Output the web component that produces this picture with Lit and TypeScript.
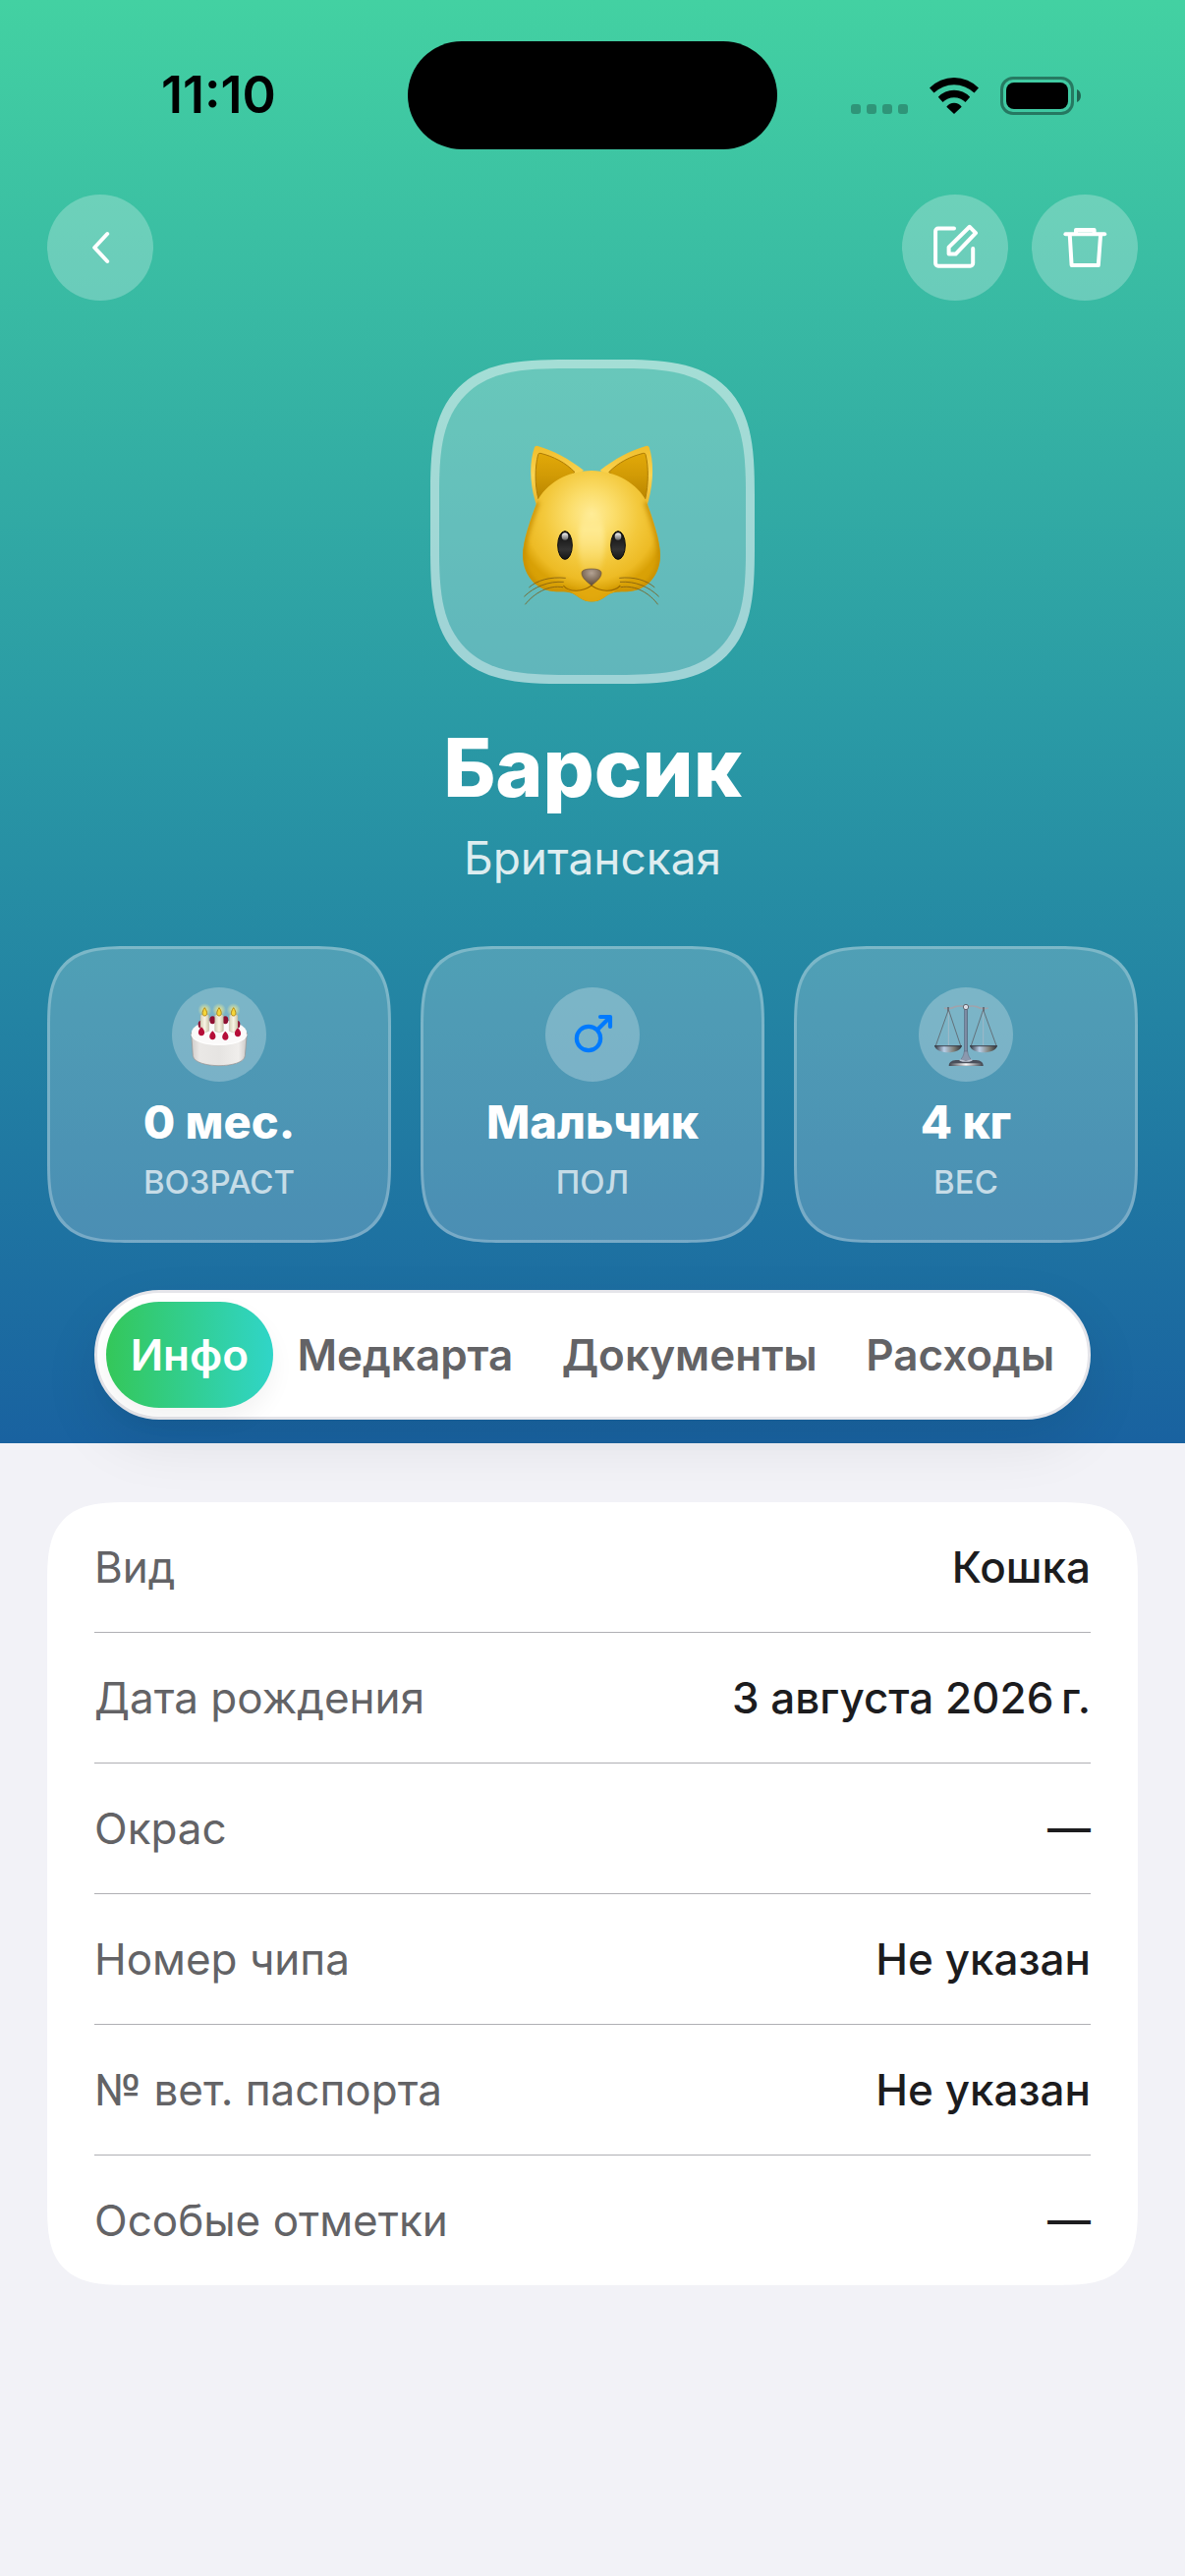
import { css, html, LitElement, svg } from "lit";
import { customElement, property, state } from "lit/decorators.js";
import { classMap } from "lit/directives/class-map.js";

export type PetIconName = "back" | "edit" | "trash" | "cake" | "male" | "scales" | "cat";

// Round icons share one box per family, the cat has a taller one.
const VIEW_BOXES: Record<PetIconName, string> = {
	back: "0 0 108 108",
	edit: "0 0 108 108",
	trash: "0 0 108 108",
	cake: "435 195 288 288",
	male: "435 195 288 288",
	scales: "435 195 288 288",
	cat: "324 276 450 534",
};

const ICONS = {
	back: svg`
		<path d="M61.2 40 L48.2 54 L61.2 68" fill="none" stroke="#fff" stroke-width="4" stroke-linecap="round" stroke-linejoin="round"/>
	`,
	edit: svg`
		<g fill="none" stroke="#fff" stroke-width="4" stroke-linecap="round" stroke-linejoin="round">
			<path d="M53 34.6 H36.8 a2.7 2.7 0 0 0 -2.7 2.7 V70 a2.7 2.7 0 0 0 2.7 2.7 H69.5 a2.7 2.7 0 0 0 2.7 -2.7 V55"/>
			<path d="M68.8 32.8 L75 39.2 L54.6 60.6 H47.6 V53.6 Z"/>
		</g>
	`,
	trash: svg`
		<g fill="none" stroke="#fff" stroke-width="4" stroke-linecap="round" stroke-linejoin="round">
			<path d="M34.4 40.3 H74.2"/>
			<path d="M45 39 V36 H63.6 V39"/>
			<path d="M38.8 42 L40.6 72 H67.8 L70 42"/>
		</g>
	`,
	cake: svg`
		<defs>
			<linearGradient id="side" x1="0" x2="1">
				<stop offset="0" stop-color="#cfccca"/><stop offset=".15" stop-color="#eae8e6"/>
				<stop offset=".5" stop-color="#e6e4e2"/><stop offset=".85" stop-color="#f0eeec"/><stop offset="1" stop-color="#cac7c5"/>
			</linearGradient>
			<radialGradient id="glow">
				<stop offset="0" stop-color="#ffee78" stop-opacity=".95"/><stop offset="1" stop-color="#f4f0a0" stop-opacity="0"/>
			</radialGradient>
			<linearGradient id="wax" x1="0" x2="1">
				<stop offset="0" stop-color="#d6cfb8"/><stop offset=".5" stop-color="#f8f4e4"/><stop offset="1" stop-color="#cdc5ab"/>
			</linearGradient>
		</defs>
		<path d="M494 334 L499 404 C504 444 654 444 658 404 L664 334 Z" fill="url(#side)" stroke="#99908c" stroke-width="2"/>
		<ellipse cx="579" cy="333" rx="84" ry="38" fill="#fbfafa"/>
		<path d="M495 338 C500 380 658 380 663 338" fill="none" stroke="#fff" stroke-width="4"/>
		<g fill="#8f0f32">
			<ellipse cx="559" cy="295" rx="9" ry="12"/><ellipse cx="598" cy="295" rx="9" ry="12"/>
			<ellipse cx="522" cy="308" rx="7" ry="11"/><ellipse cx="636" cy="308" rx="7" ry="11"/>
		</g>
		<g fill="url(#wax)" stroke="#aaa48f" stroke-width="1">
			<path d="M522 280 Q535 275 548 280 V328 Q535 337 522 328 Z"/>
			<path d="M566 280 Q579 275 592 280 V328 Q579 337 566 328 Z"/>
			<path d="M610 280 Q623 275 636 280 V328 Q623 337 610 328 Z"/>
		</g>
		<g fill="url(#glow)">
			<circle cx="535" cy="264" r="21"/><circle cx="579" cy="264" r="21"/><circle cx="623" cy="264" r="21"/>
		</g>
		<g fill="#f5d63a" stroke="#a87608" stroke-width="2.4">
			<path d="M535 257 C545 271 543 282 535 282 C527 282 525 271 535 257 Z"/>
			<path d="M579 257 C589 271 587 282 579 282 C571 282 569 271 579 257 Z"/>
			<path d="M623 257 C633 271 631 282 623 282 C615 282 613 271 623 257 Z"/>
		</g>
		<g fill="#b50d38">
			<path d="M525 316 C538 327 537 343 525 343 C513 343 512 327 525 316 Z"/>
			<path d="M559 328 C572 339 571 355 559 355 C547 355 546 339 559 328 Z"/>
			<path d="M598 329 C611 340 610 356 598 356 C586 356 585 340 598 329 Z"/>
			<path d="M636 319 C649 330 648 346 636 346 C624 346 623 330 636 319 Z"/>
		</g>
	`,
	male: svg`
		<g fill="none" stroke="#007aff" stroke-width="12.5" stroke-linecap="round" stroke-linejoin="round">
			<circle cx="567" cy="351" r="36.5"/>
			<path d="M595 323 L631 287"/>
			<path d="M603 285 H633 V315"/>
		</g>
	`,
	scales: svg`
		<defs>
			<linearGradient id="pole" x1="0" x2="1">
				<stop offset="0" stop-color="#4e5a70"/><stop offset=".5" stop-color="#93a2ba"/><stop offset="1" stop-color="#454f63"/>
			</linearGradient>
			<linearGradient id="pan" x1="0" x2="1">
				<stop offset="0" stop-color="#2c3038"/><stop offset=".35" stop-color="#b9cfe8"/>
				<stop offset=".7" stop-color="#7e7f78"/><stop offset="1" stop-color="#2c3038"/>
			</linearGradient>
			<linearGradient id="foot" x1="0" x2="1">
				<stop offset="0" stop-color="#3f434c"/><stop offset=".5" stop-color="#fff"/><stop offset="1" stop-color="#3f434c"/>
			</linearGradient>
		</defs>
		<path d="M526 262 V372 M632 262 V372" stroke="#a9bac6" stroke-width="2.4"/>
		<path d="M525 266 L487 373 M527 266 L563 373 M631 266 L595 373 M633 266 L672 373" stroke="#5c5f66" stroke-width="2.4"/>
		<path d="M513 258 Q530 263 546 254 Q563 249 579 256 Q595 249 612 254 Q628 263 647 258" fill="none" stroke="#a0a3ac" stroke-width="5"/>
		<path d="M525 255 V268 M633 255 V268" stroke="#55555e" stroke-width="4"/>
		<rect x="574" y="258" width="10" height="138" fill="url(#pole)"/>
		<circle cx="579" cy="255" r="8" fill="#d9dde5" stroke="#50545e" stroke-width="2.5"/>
		<path d="M574 390 H584 C585 404 592 412 598 420 H560 C566 412 573 404 574 390 Z" fill="#8b98ae" stroke="#5d687c" stroke-width="1.5"/>
		<path d="M483 372 H567 C563 401 487 401 483 372 Z" fill="url(#pan)"/>
		<path d="M591 372 H675 C671 401 595 401 591 372 Z" fill="url(#pan)"/>
		<path d="M483 374 H567 M591 374 H675" stroke="#3c4350" stroke-width="3"/>
		<path d="M527 435 C527 420 540 417 554 417 H605 C619 417 632 420 632 435 Z" fill="#4a4f5b"/>
		<path d="M531 427 H628 L631 434 H528 Z" fill="url(#foot)"/>
		<path d="M560 417 Q579 424 598 417" fill="none" stroke="#bcc5d4" stroke-width="4"/>
	`,
	cat: svg`
		<defs>
			<radialGradient id="fur" gradientUnits="userSpaceOnUse" cx="546" cy="520" r="235">
				<stop offset="0" stop-color="#ffec97"/><stop offset=".3" stop-color="#fbdd6a"/>
				<stop offset=".62" stop-color="#f3c83b"/><stop offset=".86" stop-color="#edbb25"/><stop offset="1" stop-color="#d9a106"/>
			</radialGradient>
			<linearGradient id="muzzle" x1="0" x2="0" y1="0" y2="1">
				<stop offset="0" stop-color="#ffec97" stop-opacity="0"/><stop offset=".3" stop-color="#ffec97" stop-opacity=".8"/>
				<stop offset="1" stop-color="#ffec97" stop-opacity="0"/>
			</linearGradient>
			<linearGradient id="ear" x1="0" x2="0" y1="0" y2="1">
				<stop offset="0" stop-color="#e2a909"/><stop offset=".5" stop-color="#d19a05"/><stop offset="1" stop-color="#b98500"/>
			</linearGradient>
			<linearGradient id="rim" x1="0" x2="0" y1="0" y2="1">
				<stop offset="0" stop-color="#f0bd2a"/><stop offset=".5" stop-color="#fbd452"/><stop offset="1" stop-color="#e9b52a"/>
			</linearGradient>
			<linearGradient id="eye" x1="0" x2="0" y1="0" y2="1">
				<stop offset="0" stop-color="#0c0c0c"/><stop offset=".65" stop-color="#333"/><stop offset="1" stop-color="#161616"/>
			</linearGradient>
			<linearGradient id="shine" x1="0" x2="0" y1="0" y2="1">
				<stop offset="0" stop-color="#f4f4f4"/><stop offset="1" stop-color="#666"/>
			</linearGradient>
			<radialGradient id="nose" cx=".5" cy=".25" r=".7">
				<stop offset="0" stop-color="#b4a394"/><stop offset="1" stop-color="#64503c"/>
			</radialGradient>
			<filter id="soft" x="-20%" y="-20%" width="140%" height="140%"><feGaussianBlur stdDeviation="7"/></filter>
			<clipPath id="head">
				<path d="M546 387 C470 387 404 430 380 482 C360 535 336 600 336 646 C338 715 385 757 440 757 C488 757 490 763 507 774 Q546 801 586 774 C603 763 605 757 652 757 C707 757 755 715 756 646 C756 600 733 535 714 482 C690 430 622 387 546 387 Z"/>
			</clipPath>
		</defs>
		<path d="M378 492 C356 430 356 360 372 316 Q374 310 382 312 C430 326 478 352 522 386 Z" fill="url(#rim)"/>
		<path d="M716 492 C736 430 737 360 722 316 Q720 310 712 312 C664 326 616 352 572 386 Z" fill="url(#rim)"/>
		<path d="M384 474 C372 430 373 375 383 338 Q384 333 390 334 C430 344 466 362 495 392 Z" fill="url(#ear)" stroke="#ae7c05" stroke-width="3"/>
		<path d="M710 474 C720 430 721 375 711 338 Q710 333 704 334 C664 344 628 362 599 392 Z" fill="url(#ear)" stroke="#ae7c05" stroke-width="3"/>
		<g clip-path="url(#head)">
			<rect x="330" y="380" width="440" height="430" fill="url(#fur)"/>
			<ellipse cx="546" cy="610" rx="40" ry="110" fill="url(#muzzle)" filter="url(#soft)"/>
			<path d="M380 482 C360 535 336 600 336 646 C338 715 385 757 440 757 C488 757 490 763 507 774 Q546 801 586 774 C603 763 605 757 652 757 C707 757 755 715 756 646 C756 600 733 535 714 482" fill="none" stroke="#c38a00" stroke-width="18" opacity=".75" filter="url(#soft)"/>
			<path d="M462 742 C490 762 522 752 546 739 C570 752 602 762 632 742 L612 760 L586 774 Q546 801 507 774 Z" fill="#e6ac10" opacity=".75"/>
		</g>
		<path d="M460 738 C480 762 520 756 546 738 C572 756 612 762 634 738" fill="none" stroke="#9a6800" stroke-width="3.4"/>
		<ellipse cx="465" cy="615" rx="22" ry="43" fill="url(#eye)" stroke="#0c0c0c" stroke-width="3"/>
		<ellipse cx="627" cy="615" rx="22" ry="43" fill="url(#eye)" stroke="#0c0c0c" stroke-width="3"/>
		<ellipse cx="465" cy="588" rx="10" ry="11" fill="url(#shine)"/>
		<ellipse cx="627" cy="588" rx="10" ry="11" fill="url(#shine)"/>
		<path d="M516 700 C516 690 530 687 546 687 C562 687 576 690 576 700 C576 715 560 726 546 738 C532 726 516 715 516 700 Z" fill="url(#nose)" stroke="#6b5135" stroke-width="2"/>
		<g fill="none" stroke="#7c5a14" stroke-width="2.8" stroke-linecap="round" opacity=".85">
			<path d="M466 715 C420 710 380 722 356 743"/>
			<path d="M460 727 C415 724 370 742 341 771"/>
			<path d="M458 743 C415 735 370 762 344 795"/>
			<path d="M632 715 C676 710 714 722 738 743"/>
			<path d="M634 727 C680 724 722 742 751 771"/>
			<path d="M636 743 C680 735 724 762 748 795"/>
		</g>
	`,
};

@customElement("pet-icon")
export class PetIcon extends LitElement {
	@property()
	name: PetIconName = "back";

	static override styles = css`
		:host {
			display: block;
			inline-size: 100%;
		}

		svg {
			display: block;
			inline-size: 100%;
			block-size: auto;
		}
	`;

	override render() {
		return html`<svg viewBox=${VIEW_BOXES[this.name]} aria-hidden="true">${ICONS[this.name]}</svg>`;
	}
}

@customElement("phone-status")
export class PhoneStatus extends LitElement {
	static override styles = css`
		:host {
			display: grid;
			grid-template-columns: 1fr 376px 1fr;
			align-items: center;
			padding-block: 42px 46px;
			color: #000;
		}

		.time {
			padding-inline-start: 30px;
			font-size: 52px;
			font-weight: 600;
			line-height: 60px;
			text-align: center;
		}

		.island {
			block-size: 110px;
			border-radius: 55px;
			background: #000;
		}

		.signals {
			display: flex;
			justify-content: flex-end;
			align-items: center;
			gap: 22px;
			padding-inline-end: 106px;
		}

		svg {
			display: block;
		}
	`;

	override render() {
		return html`
			<time class="time">11:10</time>
			<div class="island"></div>
			<div class="signals">
				<svg width="58" height="39" viewBox="0 0 58 39" aria-hidden="true" opacity="0.25">
					<rect x="0" y="28" width="10" height="10" rx="3"/>
					<rect x="16" y="28" width="10" height="10" rx="3"/>
					<rect x="32" y="28" width="10" height="10" rx="3"/>
					<rect x="48" y="28" width="10" height="10" rx="3"/>
				</svg>
				<svg width="50" height="39" viewBox="0 -1 50 39" aria-hidden="true">
					<path d="M0 10.5 A35 35 0 0 1 50 10.5 L45.5 15.5 A29.7 29.7 0 0 0 4.5 15.5 Z"/>
					<path d="M8.8 19.7 A22.2 22.2 0 0 1 41.2 19.7 L36.5 25 A16.4 16.4 0 0 0 13.5 25 Z"/>
					<path d="M17.3 29.7 A9.4 9.4 0 0 1 32.7 29.7 L25 37 Z"/>
				</svg>
				<svg width="82" height="39" viewBox="0 0 82 39" aria-hidden="true">
					<rect x="1.5" y="1.5" width="72" height="36" rx="11.5" fill="none" stroke="#000" stroke-width="3" opacity="0.4"/>
					<rect x="6" y="6" width="63" height="27" rx="8"/>
					<path d="M78 13 C83.3 15 83.3 24 78 26 Z" opacity="0.5"/>
				</svg>
			</div>
		`;
	}
}

interface Stat {
	icon: PetIconName;
	value: string;
	label: string;
}

interface Detail {
	label: string;
	value: string;
}

@customElement("app-root")
export class AppRoot extends LitElement {
	@state()
	private tab = "Инфо";

	private readonly tabs = ["Инфо", "Медкарта", "Документы", "Расходы"];

	private readonly stats: Stat[] = [
		{ icon: "cake", value: "0 мес.", label: "ВОЗРАСТ" },
		{ icon: "male", value: "Мальчик", label: "ПОЛ" },
		{ icon: "scales", value: "4 кг", label: "ВЕС" },
	];

	private readonly details: Detail[] = [
		{ label: "Вид", value: "Кошка" },
		{ label: "Дата рождения", value: "3 августа 2026\u202fг." },
		{ label: "Окрас", value: "—" },
		{ label: "Номер чипа", value: "Не указан" },
		{ label: "№ вет. паспорта", value: "Не указан" },
		{ label: "Особые отметки", value: "—" },
	];

	static override styles = css`
		:host {
			display: block;
			min-block-size: 100vh;
			background: #f2f2f7;
			color: #1c1c1e;
			font-family: Inter, "Noto Sans", sans-serif;
		}

		* {
			box-sizing: border-box;
		}

		button {
			margin: 0;
			padding: 0;
			border: 0;
			background: none;
			color: inherit;
			font: inherit;
			cursor: pointer;
		}

		header {
			padding-block-end: 24px;
			background: linear-gradient(#43d1a2, #2a9aa5 50%, #1962a0);
			color: #fff;
		}

		.toolbar {
			display: flex;
			gap: 24px;
			padding-inline: 48px;
		}

		.round {
			inline-size: 108px;
			block-size: 108px;
			border-radius: 50%;
			background: rgb(255 255 255 / 0.25);
		}

		.back {
			margin-inline-end: auto;
		}

		.profile {
			display: flex;
			flex-direction: column;
			align-items: center;
			padding-block: 60px;
		}

		.avatar {
			display: grid;
			place-items: center;
			inline-size: 330px;
			block-size: 330px;
			margin-block-end: 36px;
			border: 9px solid rgb(255 255 255 / 0.4);
			border-radius: 96px;
			background: rgb(255 255 255 / 0.25);
		}

		.avatar pet-icon {
			inline-size: 150px;
		}

		h1 {
			margin: 0 0 12px;
			font-size: 82px;
			font-weight: 800;
			line-height: 100px;
		}

		.breed {
			margin: 0;
			color: rgb(255 255 255 / 0.85);
			font-size: 46px;
			line-height: 59px;
		}

		.stats {
			display: grid;
			grid-template-columns: repeat(3, 1fr);
			gap: 30px;
			margin: 0 48px 48px;
			padding: 0;
			list-style: none;
		}

		.stat {
			display: flex;
			flex-direction: column;
			align-items: center;
			gap: 12px;
			padding-block: 39px;
			border: 3px solid rgb(255 255 255 / 0.25);
			border-radius: 60px;
			background: rgb(255 255 255 / 0.2);
		}

		.badge {
			inline-size: 96px;
			block-size: 96px;
			border-radius: 50%;
			background: rgb(255 255 255 / 0.25);
		}

		.value {
			font-size: 47px;
			font-weight: 800;
			line-height: 58px;
		}

		.label {
			color: rgb(255 255 255 / 0.7);
			font-size: 33px;
			font-weight: 500;
			line-height: 40px;
		}

		.tabs {
			position: relative;
			display: flex;
			margin-inline: 96px;
			padding: 9px;
			border: 3px solid #e5e5ea;
			border-radius: 66px;
			background: #fff;
			box-shadow: 0 24px 60px rgb(0 0 0 / 0.08);
		}

		.tab {
			flex: auto;
			block-size: 108px;
			border-radius: 54px;
			color: #636366;
			font-size: 44px;
			font-weight: 600;
			text-align: center;
		}

		.tab.active {
			background: linear-gradient(90deg, #34c759, #30d5c8);
			box-shadow: 0 12px 24px rgb(0 0 0 / 0.05);
			color: #fff;
		}

		.details {
			margin: 60px 48px;
			padding-inline: 48px;
			border-radius: 60px;
			background: #fff;
			font-size: 44px;
			line-height: 54px;
		}

		.row {
			display: flex;
			justify-content: space-between;
			gap: 24px;
			padding-block: 39px;
		}

		.row + .row {
			border-block-start: 1px solid #b0b0b4;
		}

		dt {
			color: #636366;
		}

		dd {
			margin: 0;
			font-weight: 500;
		}

		/* continuous corners start earlier than round ones, hence the larger radii */
		@supports (corner-shape: squircle) {
			.avatar, .stat, .details {
				corner-shape: superellipse(1.6);
			}

			.avatar {
				border-radius: 140px;
			}

			.stat, .details {
				border-radius: 84px;
			}
		}
	`;

	private select(tab: string) {
		this.tab = tab;
	}

	override render() {
		return html`
			<header>
				<phone-status></phone-status>
				<nav class="toolbar">
					<button class="round back" aria-label="Назад"><pet-icon name="back"></pet-icon></button>
					<button class="round" aria-label="Изменить"><pet-icon name="edit"></pet-icon></button>
					<button class="round" aria-label="Удалить"><pet-icon name="trash"></pet-icon></button>
				</nav>
				<div class="profile">
					<div class="avatar"><pet-icon name="cat"></pet-icon></div>
					<h1>Барсик</h1>
					<p class="breed">Британская</p>
				</div>
				<ul class="stats">
					${this.stats.map((stat) => html`
						<li class="stat">
							<pet-icon class="badge" name=${stat.icon}></pet-icon>
							<span class="value">${stat.value}</span>
							<span class="label">${stat.label}</span>
						</li>
					`)}
				</ul>
				<div class="tabs" role="tablist">
					${this.tabs.map((tab) => html`
						<button
							class=${classMap({ tab: true, active: tab === this.tab })}
							role="tab"
							aria-selected=${tab === this.tab}
							@click=${() => this.select(tab)}
						>${tab}</button>
					`)}
				</div>
			</header>
			<dl class="details">
				${this.details.map((detail) => html`
					<div class="row">
						<dt>${detail.label}</dt>
						<dd>${detail.value}</dd>
					</div>
				`)}
			</dl>
		`;
	}
}

declare global {
	interface HTMLElementTagNameMap {
		"pet-icon": PetIcon;
		"phone-status": PhoneStatus;
		"app-root": AppRoot;
	}
}
